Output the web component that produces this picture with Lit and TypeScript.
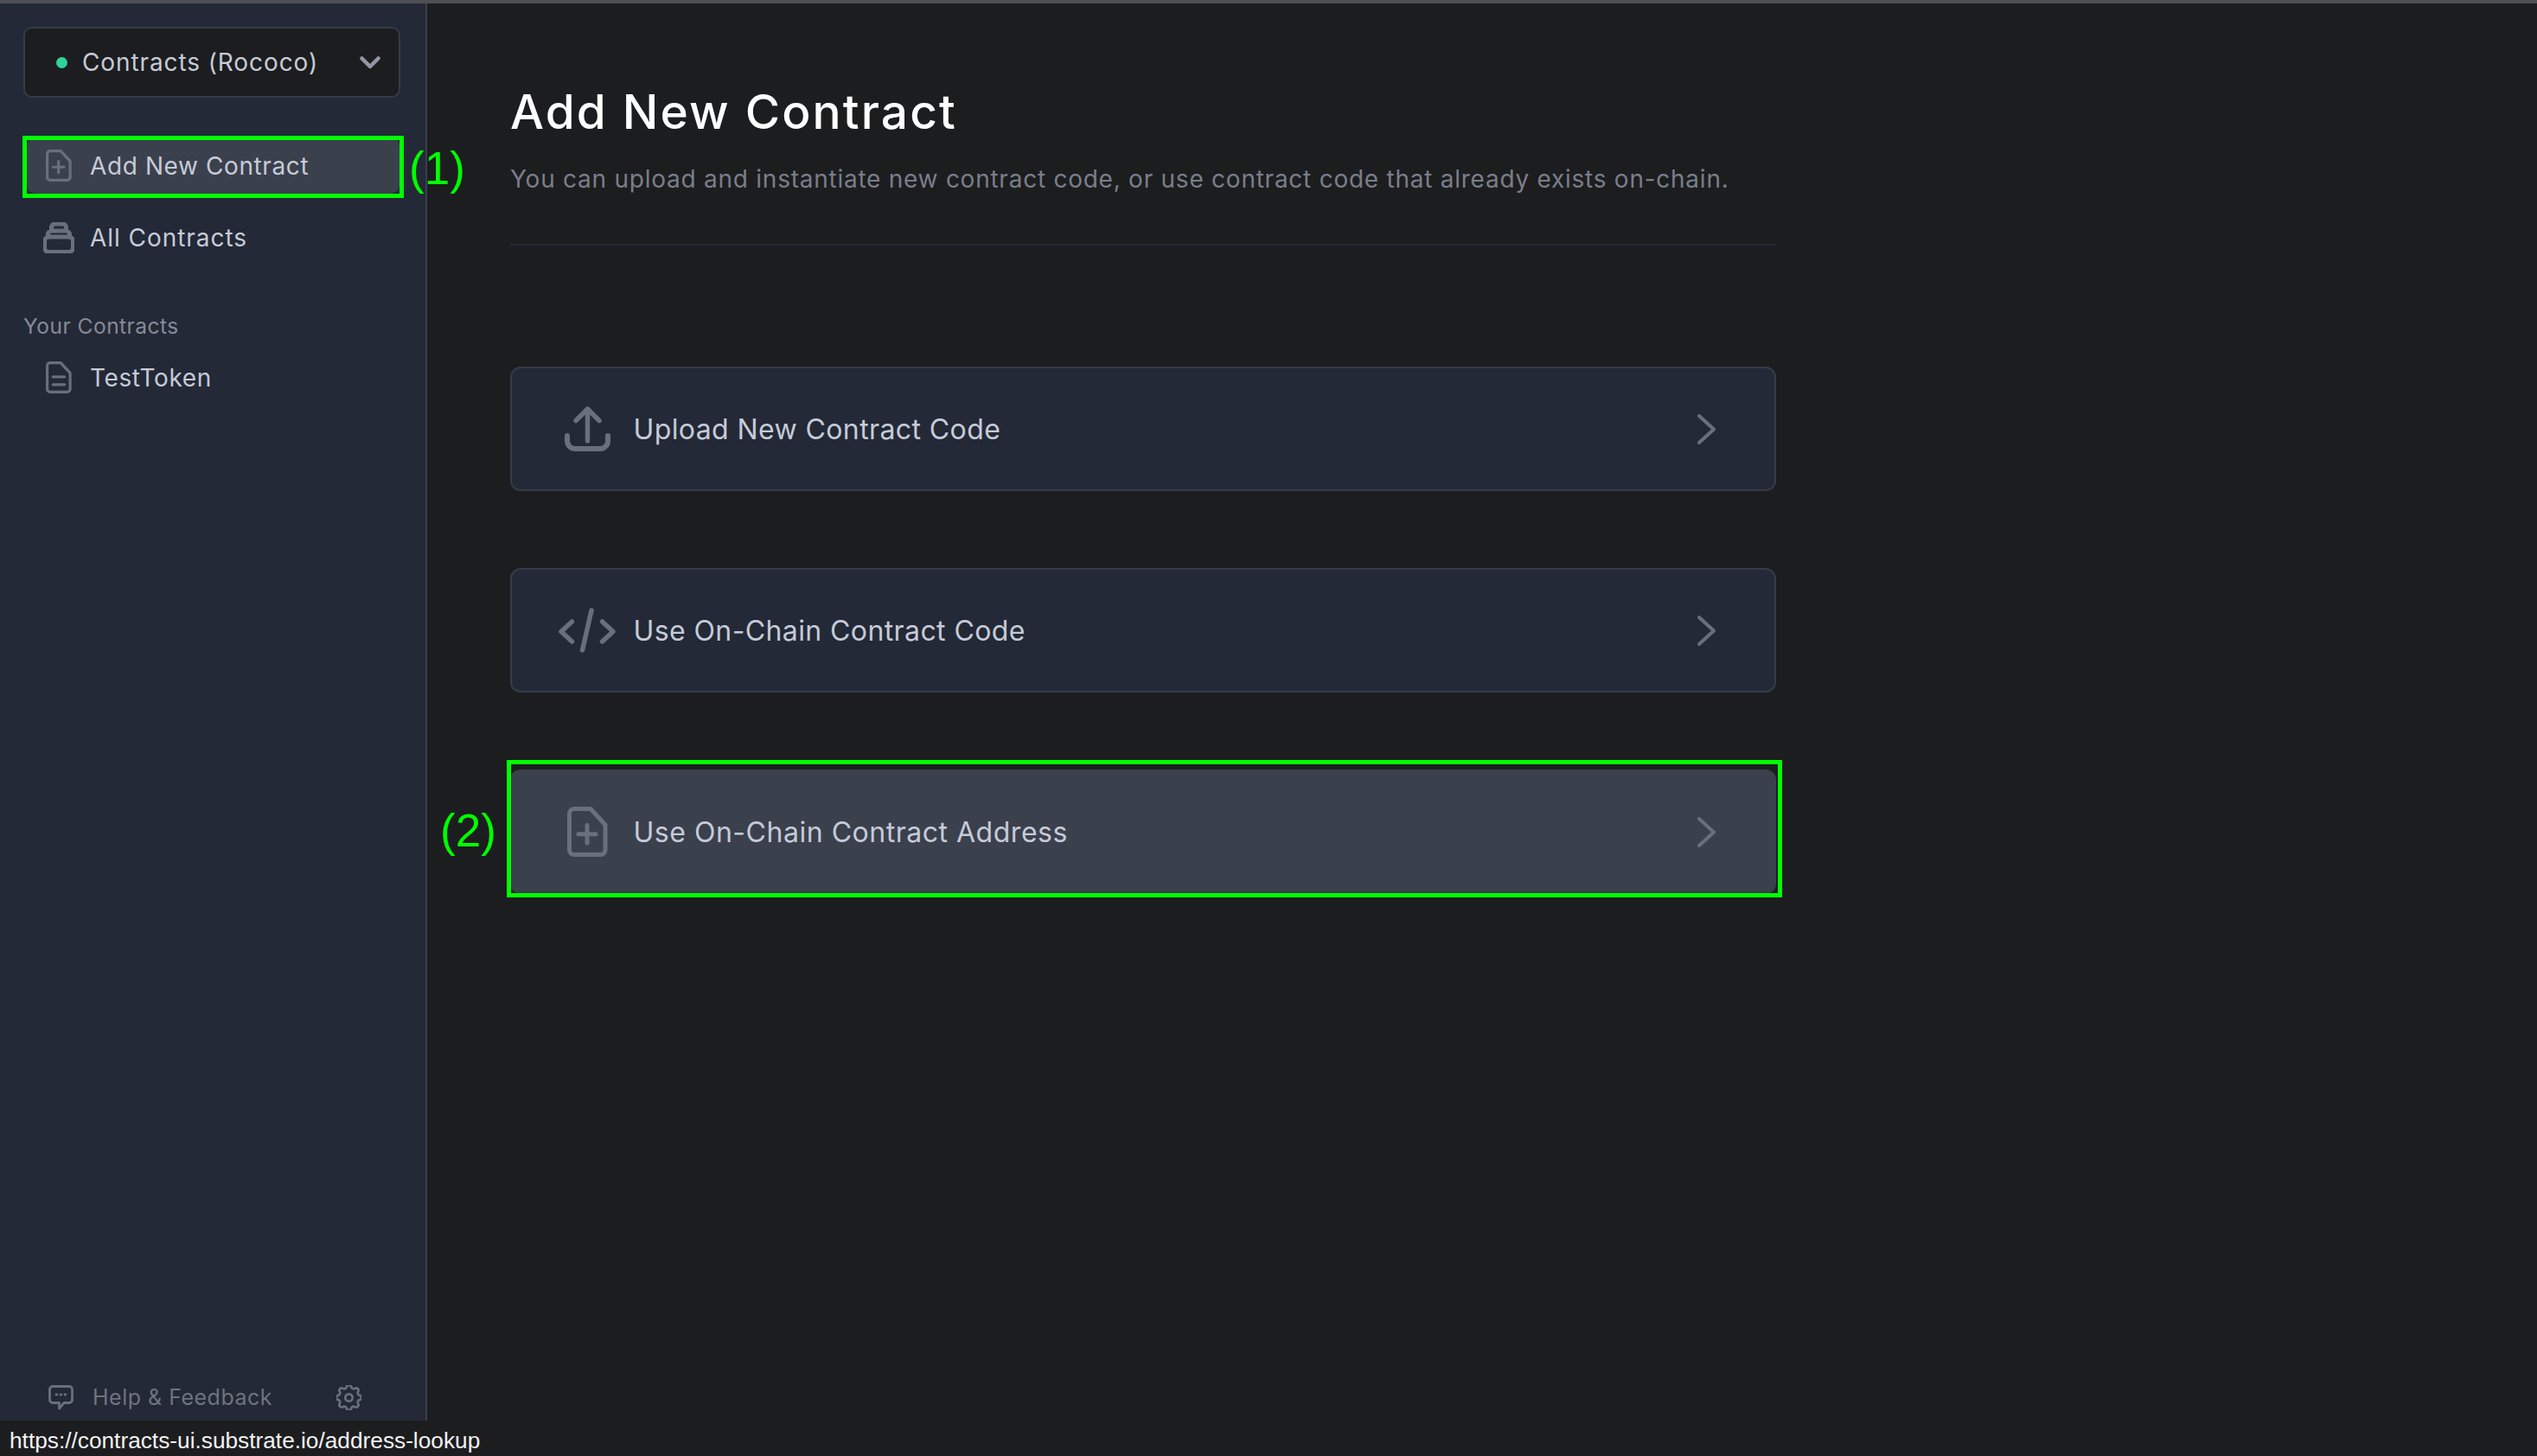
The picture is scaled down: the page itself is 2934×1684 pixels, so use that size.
import { LitElement, html, css, svg } from "lit";
import { customElement } from "lit/decorators.js";

const filePath = svg`<path d="M8 2.500H27L44 21V50A5.500 5.500 0 0 1 38.500 55.500H8A5.500 5.500 0 0 1 2.500 50V8A5.500 5.500 0 0 1 8 2.500Z"/>`;
const fileBase = (inner: unknown, w: number, h: number) => html`<svg class="icon" width=${w} height=${h} viewBox="0 0 47 58">${filePath}${inner}</svg>`;
const plus = svg`<path d="M23 21.500V42M13 31.750H33"/>`;
const lines = svg`<path d="M13 28H34M13 42H34"/>`;
const stack = html`<svg class="icon" width="36" height="36" viewBox="0 0 36 36"><rect x="1.500" y="17" width="33" height="17.500" rx="5"/><path d="M5.500 17V14A4 4 0 0 1 9.500 10H26.500A4 4 0 0 1 30.500 14V17M9.500 10V6A4 4 0 0 1 13.500 2H22.500A4 4 0 0 1 26.500 6V10"/></svg>`;
const upload = html`<svg class="icon" width="53" height="52" viewBox="0 0 53 52"><path d="M26.500 4V40M13 16.500L26.500 3L40 16.500" stroke-width="5.500"/><path d="M3 34V40A9 9 0 0 0 12 49H41A9 9 0 0 0 50 40V34" stroke-width="6"/></svg>`;
const code = html`<svg class="icon" width="66" height="52" viewBox="0 0 66 52"><path d="M15.500 16L3 27.500L15.500 39M50.500 16L63 27.500L50.500 39M38 3L27.500 49" stroke-width="5.500"/></svg>`;
const chevR = html`<svg class="icon thin" width="21" height="35" viewBox="0 0 21 35"><path d="M2 2L19 17.500L2 33"/></svg>`;
const chevD = html`<svg class="icon" width="24" height="15" viewBox="0 0 24 15"><path d="M2.500 2.500L12 12L21.500 2.500" stroke="#9297a3" stroke-width="4.500"/></svg>`;
const help = html`<svg class="icon small" width="29" height="29" viewBox="0 0 29 29"><path d="M5 1.500H24A3.500 3.500 0 0 1 27.500 5V17A3.500 3.500 0 0 1 24 20.500H18L12.500 27V20.500H5A3.500 3.500 0 0 1 1.500 17V5A3.500 3.500 0 0 1 5 1.500Z"/><path d="M9 11H9.800M14 11H14.800M19 11H19.800"/></svg>`;
const gear = html`<svg class="icon gear" width="29" height="29" viewBox="3 3 18 18"><path d="M10.325 4.317c.426-1.756 2.924-1.756 3.35 0a1.724 1.724 0 002.573 1.066c1.543-.94 3.31.826 2.37 2.37a1.724 1.724 0 001.065 2.572c1.756.426 1.756 2.924 0 3.35a1.724 1.724 0 00-1.066 2.573c.94 1.543-.826 3.31-2.37 2.37a1.724 1.724 0 00-2.572 1.065c-.426 1.756-2.924 1.756-3.35 0a1.724 1.724 0 00-2.573-1.066c-1.543.94-3.31-.826-2.37-2.37a1.724 1.724 0 00-1.065-2.572c-1.756-.426-1.756-2.924 0-3.35a1.724 1.724 0 001.066-2.573c-.94-1.543.826-3.31 2.37-2.37.996.608 2.296.07 2.572-1.065z"/><circle cx="12" cy="12" r="2.600"/></svg>`;

@customElement("app-root")
export class AppRoot extends LitElement {
  static styles = css`
    :host { display: block; position: relative; width: 2934px; height: 1684px; overflow: hidden;
      background: #1c1d1f; font-family: Inter, "Noto Sans", sans-serif; color: #c5cbd8; }
    .topline { height: 4px; background: #4d4f54; }
    .layout { display: flex; height: 1680px; }
    .icon { fill: none; stroke: #6a6f7c; stroke-width: 5; stroke-linecap: round; stroke-linejoin: round; flex: none; display: block; }
    .icon.thin { stroke-width: 4; }
    .icon.small { stroke-width: 2.800; }
    .icon.gear { stroke-width: 1.700; }
    .sidebar { width: 494px; box-sizing: border-box; border-right: 2px solid #3a3f4d; background: #232936;
      display: flex; flex-direction: column; padding: 27px 0 48px; }
    .select { margin: 0 29px 0 27px; height: 82px; box-sizing: border-box; border: 2px solid #363b49; border-radius: 10px;
      background: #1c1d1f; display: flex; align-items: center; padding: 0 21px 0 36px; font-size: 28px; letter-spacing: 0.900px; }
    .dot { width: 13px; height: 13px; border-radius: 50%; background: #2fd39a; margin-right: 17px; flex: none; }
    .select .label { flex: 1; }
    .nav { display: flex; flex-direction: column; gap: 20px; margin: 46px 30px 0 31px; }
    .item { height: 61px; border-radius: 10px; display: flex; align-items: center; padding-left: 19px; font-size: 28px; letter-spacing: 0.950px; }
    .item.file { padding-left: 22px; letter-spacing: 0.600px; }
    .item .icon { margin-right: 18px; }
    .item.file .icon { margin-right: 21px; }
    .item.active { background: #3b404d; height: 65px; }
    .heading { margin: 57px 0 14px 27px; height: 30px; line-height: 30px; font-size: 24.500px; letter-spacing: 0.500px; color: #878b97; }
    .recent { margin: 0 30px 0 31px; }
    .foot { margin-top: auto; height: 40px; display: flex; align-items: center; padding-left: 56px; font-size: 25px; letter-spacing: 0.500px; color: #6f7380; }
    .foot .txt { margin-left: 22px; margin-right: 74px; }
    main { flex: 1; padding: 95px 0 0 96px; }
    .col { width: 1464px; }
    h1 { margin: 0; font-size: 55px; line-height: 60px; font-weight: 500; color: #fff; letter-spacing: 2.150px; }
    .desc { margin: 28px 0 0; font-size: 28px; line-height: 40px; letter-spacing: 0.750px; color: #7a7e8a; }
    hr { margin: 55px 0 0; border: 0; height: 2px; background: #232936; }
    .cards { margin-top: 140px; display: flex; flex-direction: column; gap: 89px; }
    .card { height: 144px; box-sizing: border-box; border: 2px solid #363b49; border-radius: 12px; background: #232936;
      display: flex; align-items: center; padding-right: 68px; font-size: 32px; letter-spacing: 0.400px; }
    .card.active { background: #3b404d; border-color: #3b404d; letter-spacing: 0.520px; }
    .ic { width: 140.500px; flex: none; display: flex; justify-content: center; padding: 0 0 0 34px; box-sizing: border-box; }
    .card .t { flex: 1; }
    .status { position: absolute; left: 0; bottom: 0; width: 566px; height: 41px; background: #1c1d1f; color: #f3f3f3;
      font-family: "Liberation Sans", Arial, sans-serif; font-size: 26.250px; line-height: 46px; padding-left: 11px; box-sizing: border-box; white-space: nowrap; }
    .mark { position: absolute; border: 5px solid #00ff00; box-sizing: border-box; }
    .m1 { left: 26px; top: 157px; width: 441px; height: 72px; }
    .m2 { left: 586px; top: 879px; width: 1475px; height: 159px; }
    .num { position: absolute; color: #00ff00; font-family: "Liberation Sans", Arial, sans-serif; font-size: 53px; line-height: 60px; white-space: nowrap; }
    .n1 { left: 473px; top: 165px; }
    .n2 { left: 509px; top: 931px; }
  `;

  private card(icon: unknown, text: string, active = false) {
    return html`<div class="card ${active ? "active" : ""}">
      <div class="ic">${icon}</div><div class="t">${text}</div>${chevR}
    </div>`;
  }

  render() {
    return html`
      <div class="topline"></div>
      <div class="layout">
        <aside class="sidebar">
          <div class="select"><span class="dot"></span><span class="label">Contracts (Rococo)</span>${chevD}</div>
          <nav class="nav">
            <div class="item file active">${fileBase(plus, 30, 37)}<span>Add New Contract</span></div>
            <div class="item">${stack}<span>All Contracts</span></div>
          </nav>
          <div class="heading">Your Contracts</div>
          <div class="recent"><div class="item file">${fileBase(lines, 30, 37)}<span>TestToken</span></div></div>
          <div class="foot">${help}<span class="txt">Help &amp; Feedback</span>${gear}</div>
        </aside>
        <main>
          <div class="col">
            <h1>Add New Contract</h1>
            <p class="desc">You can upload and instantiate new contract code, or use contract code that already exists on-chain.</p>
            <hr />
            <div class="cards">
              ${this.card(upload, "Upload New Contract Code")}
              ${this.card(code, "Use On-Chain Contract Code")}
              ${this.card(fileBase(plus, 47, 58), "Use On-Chain Contract Address", true)}
            </div>
          </div>
        </main>
      </div>
      <div class="status">https://contracts-ui.substrate.io/address-lookup</div>
      <div class="mark m1"></div>
      <div class="mark m2"></div>
      <div class="num n1">(1)</div>
      <div class="num n2">(2)</div>
    `;
  }
}
